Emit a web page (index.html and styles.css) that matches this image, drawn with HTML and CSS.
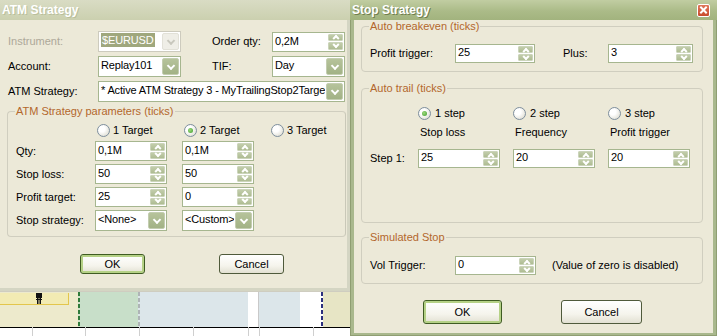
FILE: index.html
```html
<!DOCTYPE html>
<html>
<head>
<meta charset="utf-8">
<title>ATM Strategy</title>
<link rel="stylesheet" href="styles.css">
</head>
<body>
<div class="chart">
  <div class="bands">
    <div class="bd-yel"></div>
    <div class="vd vd-green"></div>
    <div class="bd-green"></div>
    <div class="vd vd-gray"></div>
    <div class="bd-blue1"></div>
    <div class="bd-white1"></div>
    <div class="vl"></div>
    <div class="bd-blue2"></div>
    <div class="bd-white2"></div>
    <div class="vd vd-navy"></div>
    <div class="bd-yel2"></div>
  </div>
  <div class="axis"></div>
  <div class="marker">
    <svg class="pin" width="8" height="11" viewBox="0 0 8 11"><rect x="1" y="0" width="6" height="5" fill="#111"/><rect x="2" y="5" width="1.5" height="6" fill="#111"/><rect x="4.5" y="5" width="1.5" height="6" fill="#111"/><rect x="1" y="6" width="6" height="1" fill="#111"/></svg>
  </div>
  <span class="gl gl1"></span><span class="gl gl2"></span><span class="gl gl3"></span><span class="gl gl4"></span><span class="gl gl5"></span><span class="gl gl6"></span><span class="gl gl7"></span>
</div>

<div class="win win-atm">
  <div class="titlebar inactive"><span>ATM Strategy</span></div>
  <div class="body body-atm">
    <div class="form-top">
      <span class="lbl dis">Instrument:</span>
      <div class="combo combo-s dis"><span class="val"><span class="sel">$EURUSD</span></span><span class="dd"></span></div>
      <span class="lbl">Order qty:</span>
      <div class="spin spin-l"><span class="val">0,2M</span><span class="sb"><i class="up"></i><i class="dn"></i></span></div>

      <span class="lbl">Account:</span>
      <div class="combo combo-s"><span class="val">Replay101</span><span class="dd"></span></div>
      <span class="lbl">TIF:</span>
      <div class="combo"><span class="val">Day</span><span class="dd"></span></div>

      <span class="lbl">ATM Strategy:</span>
      <div class="combo span3"><span class="val">* Active ATM Strategy 3 - MyTrailingStop2Target</span><span class="dd"></span></div>
    </div>

    <div class="group g-atm">
      <span class="gtitle">ATM Strategy parameters (ticks)</span>
      <div class="radios-atm">
        <span></span>
        <label class="opt"><span class="radio"></span>1 Target</label>
        <label class="opt"><span class="radio on"></span>2 Target</label>
        <label class="opt"><span class="radio"></span>3 Target</label>
      </div>
      <div class="grid-atm">
        <span class="lbl">Qty:</span>
        <div class="spin spin-l w72"><span class="val">0,1M</span><span class="sb"><i class="up"></i><i class="dn"></i></span></div>
        <div class="spin spin-l w72"><span class="val">0,1M</span><span class="sb"><i class="up"></i><i class="dn"></i></span></div>

        <span class="lbl">Stop loss:</span>
        <div class="spin spin-l w72"><span class="val">50</span><span class="sb"><i class="up"></i><i class="dn"></i></span></div>
        <div class="spin spin-l w72"><span class="val">50</span><span class="sb"><i class="up"></i><i class="dn"></i></span></div>

        <span class="lbl">Profit target:</span>
        <div class="spin spin-l w72"><span class="val">25</span><span class="sb"><i class="up"></i><i class="dn"></i></span></div>
        <div class="spin spin-l w72"><span class="val">0</span><span class="sb"><i class="up"></i><i class="dn"></i></span></div>

        <span class="lbl">Stop strategy:</span>
        <div class="combo w72"><span class="val">&lt;None&gt;</span><span class="dd"></span></div>
        <div class="combo w72"><span class="val">&lt;Custom&gt;</span><span class="dd"></span></div>
      </div>
    </div>

    <div class="btns btns-atm">
      <button class="btn btn-s default">OK</button>
      <button class="btn btn-s">Cancel</button>
    </div>
  </div>
</div>

<div class="win win-stop">
  <div class="titlebar active"><span>Stop Strategy</span><span class="close"></span></div>
  <div class="body body-stop">
    <div class="group g-be">
      <span class="gtitle">Auto breakeven (ticks)</span>
      <div class="grid-be">
        <span class="lbl">Profit trigger:</span>
        <div class="spin spin-r w80"><span class="val">25</span><span class="sb"><i class="up"></i><i class="dn"></i></span></div>
        <span class="lbl">Plus:</span>
        <div class="spin spin-r"><span class="val">3</span><span class="sb"><i class="up"></i><i class="dn"></i></span></div>
      </div>
    </div>

    <div class="group g-trail">
      <span class="gtitle">Auto trail (ticks)</span>
      <div class="grid-trail">
        <span></span>
        <label class="opt opt-r"><span class="radio on"></span>1 step</label>
        <label class="opt opt-r"><span class="radio"></span>2 step</label>
        <label class="opt opt-r"><span class="radio"></span>3 step</label>

        <span></span>
        <span class="hdr">Stop loss</span>
        <span class="hdr">Frequency</span>
        <span class="hdr">Profit trigger</span>

        <span class="lbl">Step 1:</span>
        <div class="spin spin-r w82"><span class="val">25</span><span class="sb"><i class="up"></i><i class="dn"></i></span></div>
        <div class="spin spin-r w82"><span class="val">20</span><span class="sb"><i class="up"></i><i class="dn"></i></span></div>
        <div class="spin spin-r w82"><span class="val">20</span><span class="sb"><i class="up"></i><i class="dn"></i></span></div>
      </div>
    </div>

    <div class="group g-sim">
      <span class="gtitle">Simulated Stop</span>
      <div class="grid-sim">
        <span class="lbl">Vol Trigger:</span>
        <div class="spin spin-r w81"><span class="val">0</span><span class="sb"><i class="up"></i><i class="dn"></i></span></div>
        <span class="lbl note">(Value of zero is disabled)</span>
      </div>
    </div>

    <div class="btns btns-stop">
      <button class="btn btn-l default">OK</button>
      <button class="btn btn-l btn-cancel">Cancel</button>
    </div>
  </div>
</div>
</body>
</html>
```

FILE: styles.css
```css
* { box-sizing: border-box; }

body {
  margin: 0;
  width: 717px;
  height: 336px;
  position: relative;
  overflow: hidden;
  background: #ece9d8;
  font: 11px/13px "Liberation Sans", Arial, sans-serif;
  color: #000;
}

/* ---------- chart strip behind the dialogs ---------- */
.chart {
  position: absolute;
  left: 0;
  top: 290px;
  width: 352px;
  height: 46px;
  display: flex;
  flex-direction: column;
  background: #fff;
  border-top: 2px solid #cfcdc0;
}
.bands { display: flex; height: 35px; }
.bands > div { height: 100%; }
.bd-yel { width: 78px; background: #edeacc; }
.vd { width: 2px; }
.vd-green { background: repeating-linear-gradient(#2e7a3a 0 4px, #cfe0c8 4px 6px); }
.bd-green { width: 58px; background: #c8dfc9; }
.vd-gray { background: repeating-linear-gradient(#aeb4b6 0 4px, #dce6ea 4px 6px); }
.bd-blue1 { width: 108px; background: #dce6ea; }
.bd-white1 { width: 10px; background: #fff; }
.vl { width: 1px; background: #c9c9c9; }
.bd-blue2 { width: 41px; background: #dce6ea; }
.bd-white2 { width: 21px; background: #fff; }
.vd-navy { background: repeating-linear-gradient(#2b2f7e 0 4px, #fff 4px 6px); }
.bd-yel2 { flex: 1; background: #e7e5c5; }
.axis { flex: 1; border-top: 1px solid #000; background: #fff; }

.marker {
  position: absolute;
  left: 0;
  top: 1px;
  width: 69px;
  height: 12px;
  background: #f2ebb3;
  border-right: 1px solid #e3c64c;
  border-bottom: 1px solid #e3c64c;
}
.pin { position: absolute; left: 35px; top: 0; }

.gl { position: absolute; bottom: 0; width: 1px; height: 9px; background: #cfcfcf; }
.gl1 { left: 32px; }
.gl2 { left: 85px; }
.gl3 { left: 139px; }
.gl4 { left: 193px; }
.gl5 { left: 248px; }
.gl6 { left: 259px; }
.gl7 { left: 313px; }

/* ---------- windows ---------- */
.win {
  position: absolute;
  top: 0;
  display: flex;
  flex-direction: column;
}
.win-atm {
  left: 0;
  width: 350px;
  height: 291px;
  background: #d4d5c3;
}
.win-stop {
  left: 350px;
  width: 367px;
  height: 336px;
  background: #a9b88d;
  box-shadow: inset 1px 0 0 #8f9e72, inset -1px 0 0 #8f9e72, inset 0 -1px 0 #8f9e72;
}

.titlebar {
  height: 20px;
  flex: none;
  display: flex;
  align-items: center;
  justify-content: space-between;
  padding: 0 7px 0 2px;
  color: #fff;
  font: bold 12px/14px "Liberation Sans", Arial, sans-serif;
}
.titlebar.inactive {
  background: linear-gradient(#d9dcc4, #cbd0af);
  text-shadow: 1px 1px 0 #b9bf9c;
}
.titlebar.active {
  background: linear-gradient(#c1cda2, #abbb88 55%, #a2b37e);
  text-shadow: 1px 1px 0 #6f7e4f;
}
.close {
  position: relative;
  width: 13px;
  height: 13px;
  border: 1px solid #fff;
  border-radius: 2px;
  background: linear-gradient(#e0785a, #c84a2c);
}
.close::before, .close::after {
  content: "";
  position: absolute;
  left: 1px;
  top: 4px;
  width: 9px;
  height: 2px;
  background: #fff;
  transform: rotate(45deg);
}
.close::after { transform: rotate(-45deg); }

.body { flex: 1; background: #ece9d8; }
.body-atm { margin: 0 3px 3px 0; padding: 11px 0 0 8px; }
.body-stop { margin: 0 4px 3px 4px; padding: 6px 10px 0 7px; }

.lbl { white-space: nowrap; }
.dis { color: #aca899; }

/* ---------- controls ---------- */
.combo, .spin {
  display: flex;
  background: #fff;
  border: 1px solid #a6b68f;
}
.combo { height: 21px; }
.combo .val { padding: 2px 0 0 2px; }
.val {
  flex: 1;
  min-width: 0;
  overflow: hidden;
  white-space: nowrap;
  letter-spacing: -0.15px;
}
.combo-s { width: 83px; }
.span3 { grid-column: 2 / 5; }
.w72 { width: 72px; }
.w80 { width: 80px; }
.w81 { width: 81px; }
.w82 { width: 82px; }

.dd {
  position: relative;
  flex: none;
  width: 17px;
  margin: 1px;
  border-radius: 2px;
  background: linear-gradient(#b6c39b, #a2b285);
  border: 1px solid #c3cdb0;
}
.dd::after {
  content: "";
  position: absolute;
  left: 50%;
  top: 50%;
  width: 4px;
  height: 4px;
  border-right: 2px solid #fff;
  border-bottom: 2px solid #fff;
  transform: translate(-50%, -70%) rotate(45deg);
}
.combo.dis { border-color: #cdcbbe; }
.combo.dis .val { padding-top: 1px; padding-left: 2px; }
.combo.dis .dd { background: #efeee7; border-color: #e2e1d8; }
.combo.dis .dd::after { border-color: #c8c7bd; }
.sel { background: #9fa77d; color: #fff; padding: 0 1px; display: inline-block; line-height: 14px; }

.spin-l { height: 20px; }
.spin-l .val { padding: 2px 0 0 2px; }
.spin-r { height: 19px; }
.spin-r .val { padding: 1px 0 0 2px; }
.sb {
  flex: none;
  width: 17px;
  display: flex;
  flex-direction: column;
  gap: 1px;
  padding: 1px;
}
.sb i {
  position: relative;
  flex: 1;
  display: block;
  border-radius: 1px;
  background: linear-gradient(#c2cdab, #aebc92);
  border: 1px solid #cbd4ba;
}
.sb i::after {
  content: "";
  position: absolute;
  left: 50%;
  top: 50%;
  width: 3px;
  height: 3px;
  border-left: 2px solid #fff;
  border-top: 2px solid #fff;
  transform: translate(-50%, -25%) rotate(45deg);
}
.sb i.dn::after { transform: translate(-50%, -75%) rotate(225deg); }

.radio {
  position: relative;
  flex: none;
  width: 13px;
  height: 13px;
  border-radius: 50%;
  border: 1px solid #7e8f9e;
  background: radial-gradient(circle at 35% 35%, #fff 30%, #e4e3da 75%, #d3d2c6);
}
.radio.on::after {
  content: "";
  position: absolute;
  left: 3px;
  top: 3px;
  width: 5px;
  height: 5px;
  border-radius: 50%;
  background: radial-gradient(circle at 40% 40%, #9edb7c, #3d9a2e);
}
.opt { display: flex; align-items: center; gap: 3px; padding-left: 1px; white-space: nowrap; }
.opt-r { gap: 4px; padding-left: 0; }

/* ---------- group boxes ---------- */
.group {
  position: relative;
  border: 1px solid #d0cebf;
  border-radius: 4px;
}
.gtitle {
  position: absolute;
  top: -7px;
  left: 7px;
  padding: 0 1px;
  background: #ece9d8;
  color: #b3672c;
  white-space: nowrap;
}

.form-top {
  display: grid;
  grid-template-columns: 90px 114px 60px 73px;
  grid-auto-rows: 21px;
  row-gap: 4px;
  align-items: center;
}

.g-atm {
  margin: 9px 0 0 -1px;
  width: 339px;
  padding: 11px 0 5px 8px;
  border-right-color: #c9c8b8;
}
.radios-atm {
  display: grid;
  grid-template-columns: 80px 87px 87px auto;
  height: 14px;
  margin-bottom: 4px;
  align-items: center;
}
.grid-atm {
  display: grid;
  grid-template-columns: 79px 87px 87px;
  grid-template-rows: 20px 20px 20px 21px;
  row-gap: 3px;
  align-items: center;
}

.g-be { padding: 17px 0 8px 8px; }
.grid-be {
  display: grid;
  grid-template-columns: 85px 108px 45px 85px;
  grid-template-rows: 19px;
  align-items: center;
}
.g-trail { margin-top: 16px; padding: 18px 0 54px 8px; }
.grid-trail {
  display: grid;
  grid-template-columns: 48px 95px 95px auto;
  grid-template-rows: 13px 29px 19px;
  align-items: center;
}
.hdr { align-self: start; padding: 6px 0 0 2px; white-space: nowrap; }
.g-sim { margin-top: 14px; padding: 18px 0 8px 8px; }
.grid-sim {
  display: grid;
  grid-template-columns: 85px 81px auto;
  grid-template-rows: 19px;
  align-items: center;
}
.note { padding-left: 16px; }

/* ---------- buttons ---------- */
.btns { display: flex; }
.btns-atm { margin-top: 17px; padding-left: 72px; gap: 74px; }
.btns-stop { margin-top: 16px; padding-left: 62px; gap: 59px; }
.btn {
  font: 11px/13px "Liberation Sans", Arial, sans-serif;
  color: #000;
  padding: 0;
  border: 1px solid #4f5a3b;
  border-radius: 3px;
  background: linear-gradient(#ffffff, #f5f4ec 60%, #e2e0d2);
}
.btn.default {
  border-color: #3f5c22;
  box-shadow: inset 0 0 0 2px #b5d186;
}
.btn-s { width: 65px; height: 20px; }
.btn-l { width: 79px; height: 24px; }
.btn-cancel { width: 81px; }
```
